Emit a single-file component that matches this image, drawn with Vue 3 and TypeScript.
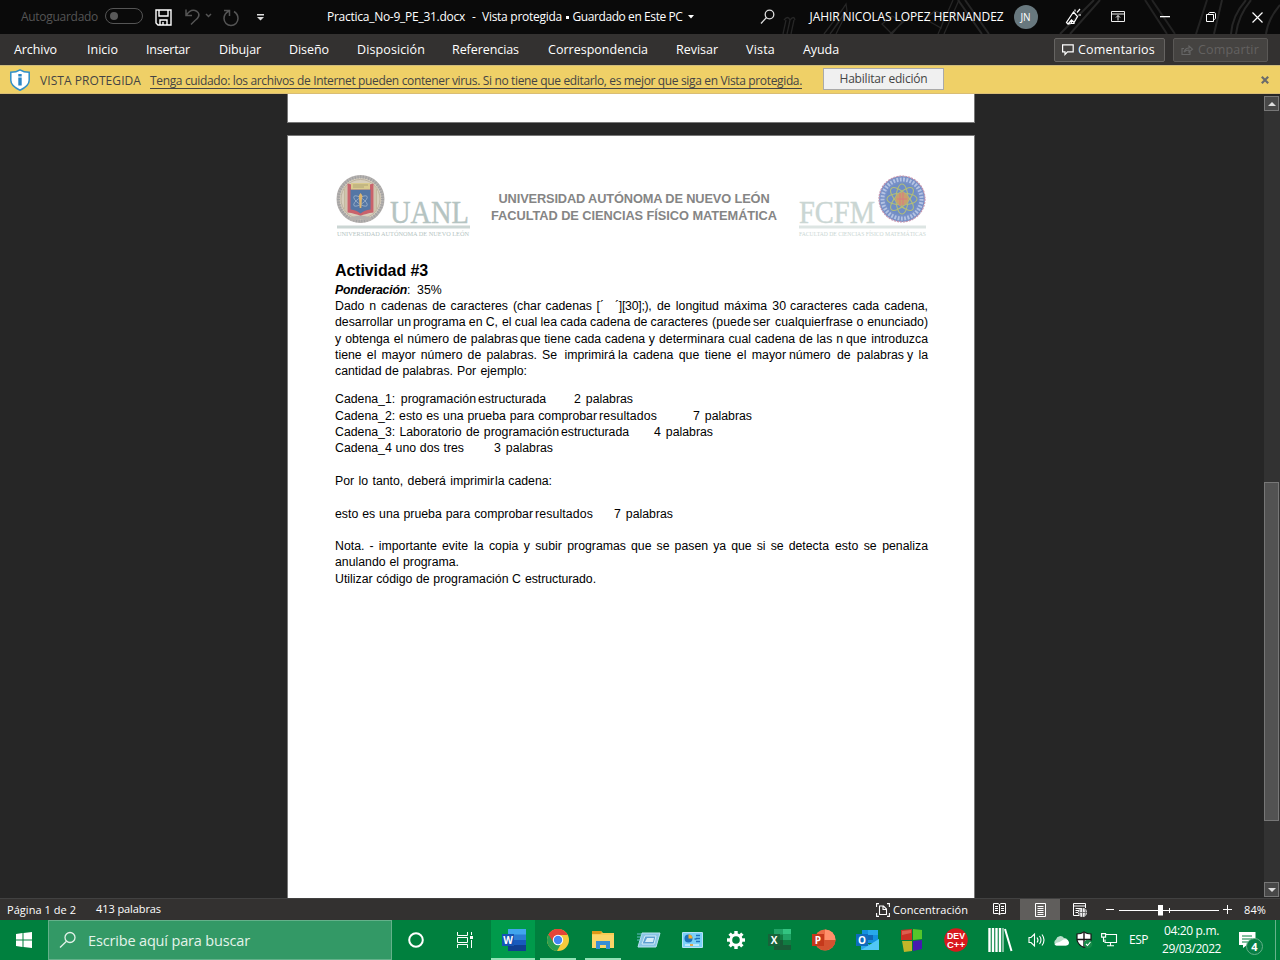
<script setup lang="ts">
import type { Directive } from 'vue'

// Stretches a label to the given width in pixels: between its letters,
// or with the "words" modifier between its words when it has several.
const vFit: Directive<HTMLElement, number, 'words'> = {
  mounted(el, binding) {
    const extra = binding.value - el.getBoundingClientRect().width
    const text = el.textContent ?? ''
    const gaps = text.split(' ').length - 1
    if (binding.modifiers.words && gaps > 0) el.style.wordSpacing = `${extra / gaps}px`
    else el.style.letterSpacing = `${extra / text.length}px`
    el.style.width = `${binding.value}px`
  },
}

const tabs: [string, number, number][] = [
  ['Archivo', 14, 57], ['Inicio', 87, 118], ['Insertar', 146, 190], ['Dibujar', 219, 261],
  ['Diseño', 289, 329], ['Disposición', 357, 425], ['Referencias', 452, 519],
  ['Correspondencia', 548, 648], ['Revisar', 676, 718], ['Vista', 746, 775], ['Ayuda', 803, 839],
]

type Run = [string, number, number]
const intro: Run[][] = [
  [['Dado n', 335, 376], ['cadenas de caracteres', 381, 508], ['(char cadenas [´', 513, 604], ['´][30];),', 615, 651.5], ['de longitud máxima 30', 657, 786], ['caracteres cada cadena,', 790, 928]],
  [['desarrollar un', 335, 411], ['programa en C,', 413, 498], ['el cual lea cada cadena de caracteres', 502, 708], ['(puede', 712, 751], ['ser cualquier', 753, 825], ['frase o enunciado)', 825.5, 928]],
  [['y obtenga el número de palabras', 335, 518], ['que tiene cada cadena y', 520, 655], ['determinara cual cadena de las n', 659, 843], ['que introduzca', 846, 928]],
  [['tiene el mayor número de palabras.', 335, 537], ['Se imprimirá', 542, 615], ['la cadena que tiene el mayor', 618, 786], ['número de palabras', 789, 904], ['y la', 907, 928]],
  [['cantidad de palabras.', 335, 453], ['Por ejemplo:', 457, 527]],
]
const rest: Run[][] = [
  [['Cadena_1: programación', 335, 476], ['estructurada', 478, 546], ['2 palabras', 574, 633]],
  [['Cadena_2: esto es una prueba para comprobar', 335, 597], ['resultados', 599, 657], ['7 palabras', 693, 752]],
  [['Cadena_3: Laboratorio de programación', 335, 559], ['estructurada', 561, 629], ['4 palabras', 654, 713]],
  [['Cadena_4 uno dos tres', 335, 464], ['3 palabras', 494, 553]],
  [],
  [['Por lo tanto, deberá imprimir', 335, 494], ['la cadena:', 495, 552]],
  [],
  [['esto es una prueba para comprobar', 335, 533], ['resultados', 535, 593], ['7 palabras', 614, 673]],
  [],
  [['Nota. - importante evite', 335, 468], ['la copia y subir programas', 474, 626], ['que se pasen ya que si se detecta', 631, 829], ['esto se penaliza', 835, 928]],
  [['anulando el programa.', 335, 459]],
  [['Utilizar código de programación C', 335, 521], ['estructurado.', 525, 596]],
]

const PAGE_LEFT = 335
const lead = (runs: Run[], i: number) => ({
  marginLeft: `${runs[i][1] - (i ? runs[i - 1][2] : PAGE_LEFT)}px`,
})
const tabLead = (i: number) => ({ marginLeft: `${tabs[i][1] - (i ? tabs[i - 1][2] : 0)}px` })
</script>

<template>
  <div class="screen">
    <header class="title">
      <svg class="doodles" width="540" height="34" viewBox="740 0 540 34" fill="none" stroke="#262626" stroke-width="2">
        <path d="M784 20q4-5 6 0q4-5 5 0M786 20l-3 14M790 20l-3 14M794 20l-3 14M824 34l18-24 4-6 1 7-17 23M830 34l15-22M836 34l10-20" stroke-width="1.3" />
        <path d="M882 24l10-8 10 6-10 12zM925 19l10-8 10 4-4 13zM938 34L953 0M944 34L959 0M890 34l20-18" stroke-width="1.3" />
        <path d="M958 0l24 34M965 0l24 34M1060 34l34-34M1070 34l30-34" />
        <path d="M1145 0l22 34M1152 0l23 34M1207 0L1196 34" stroke="#222" />
        <path d="M1246 0q-14 16-15 34M1251 0q-13 16-15 34M1280 5q-12 14-14 29M1222 0l-8 34" />
      </svg>
      <span v-fit="77" class="auto">Autoguardado</span>
      <span class="toggle"><i></i></span>
      <svg class="save" width="18" height="18" fill="none" stroke="#fff" stroke-width="1.4"><path d="M1 1h15v15h-13l-2-2zM4 1v6h9v-6M5 16v-5h7v5M8 13v3" /></svg>
      <svg class="undo" width="30" height="18" fill="none" stroke="#555" stroke-width="1.5"><path d="M2 1.500v6h6M2 7.500C5 3 9 1 13 3.500c4 3 1 7-2 9l-4 4M22 6l2.500 2.500L27 6" /></svg>
      <svg class="redo" width="18" height="18" fill="none" stroke="#555" stroke-width="1.500"><path d="M1 1.500h5.500V7M6 2C3 3.500 1 6 1 9.500a7 7 0 0 0 14 0c0-3-1.500-5.500-4-7" /></svg>
      <svg class="custom" width="9" height="7"><path d="M1 0h7v1.400H1zM1 3h7L4.500 6.500z" fill="#ddd" /></svg>
      <div class="doc">
        <span v-fit="138">Practica_No-9_PE_31.docx</span><span>-</span><span v-fit="80">Vista protegida</span><i></i><span v-fit="110">Guardado en Este PC</span>
        <svg width="6" height="4"><path d="M0 0h6L3 3.500z" fill="#fff" /></svg>
      </div>
      <svg class="find" width="16" height="16" fill="none" stroke="#ddd" stroke-width="1.300"><circle cx="9.500" cy="5.500" r="4.300" /><path d="M6.500 8.500L1 14.500" /></svg>
      <span v-fit="194" class="user">JAHIR NICOLAS LOPEZ HERNANDEZ</span>
      <span class="avatar">JN</span>
      <svg class="pen" width="17" height="18" fill="none" stroke="#fff" stroke-width="1.200"><path d="M8.500 4l4 4.500L9 14.500 6.500 12 3 16l-1.500-1.500zM1.500 14.500L3 16l3-.5M6 12.500l.5 3h2.500V14M10 3.500V1.500M12 4.500l3-3.500M13.500 7h2.500" /></svg>
      <svg class="ribbon" width="14" height="12" fill="none" stroke="#eee"><path d="M.5.5h13v10H.5zM.5 3h13M7 9.500v-5M5 6.500l2-2 2 2" /></svg>
      <svg class="min" width="10" height="2"><path d="M0 0h10v1.300H0z" fill="#fff" /></svg>
      <svg class="restore" width="10" height="10" fill="none" stroke="#fff"><path d="M.5 2.500h7v7h-7zM2.500 2.500C2.500 1 3 .5 4 .5h4c1 0 1.500.5 1.500 1.500v4c0 1-.5 1.500-2 1.500" /></svg>
      <svg class="close" width="11" height="11" fill="none" stroke="#fff" stroke-width="1.200"><path d="M.5.500l10 10M10.500.500l-10 10" /></svg>
    </header>

    <nav class="tabs">
      <span v-for="(t, i) in tabs" :key="t[0]" v-fit="t[2] - t[1]" :style="tabLead(i)">{{ t[0] }}</span>
      <div class="actions">
        <button class="on"><svg width="12" height="12" fill="none" stroke="#fff" stroke-width="1.200"><path d="M.6.900h10.600v7H5.500L3 10.500V7.900H.6z" /></svg><span v-fit="77">Comentarios</span></button>
        <button class="off"><svg width="12" height="12" fill="none" stroke="#666" stroke-width="1.100"><path d="M3 4.500H1v6h8V8M3 8c1-3 3-4 5-4V2l3.500 3.200L8 8V6C6 6 4.500 6.500 3 8z" /></svg><span v-fit="61">Compartir</span></button>
      </div>
    </nav>

    <div class="notice">
      <svg class="shield" width="20" height="22"><path d="M10 .8C7 2.800 4 3.200.8 3.200v8c0 4 4 7.500 9.200 10 5.200-2.500 9.200-6 9.200-10v-8C16 3.200 13 2.800 10 .8z" fill="#fff" stroke="#2f8fc8" stroke-width="1.500" /><path d="M8.300 5h3.400v2.500H8.300zM8.300 8.500h3.400v8H8.300z" fill="#2b86c5" /></svg>
      <span v-fit="101" class="pv">VISTA PROTEGIDA</span>
      <span v-fit="652" class="warn">Tenga cuidado: los archivos de Internet pueden contener virus. Si no tiene que editarlo, es mejor que siga en Vista protegida.</span>
      <button><span v-fit="88">Habilitar edición</span></button>
      <svg class="x" width="8" height="8"><path d="M.8.800l6.400 6.400M7.200.800L.8 7.200" stroke="#6b6b6b" stroke-width="2.200" /></svg>
    </div>

    <main class="canvas">
      <div class="pages">
        <div class="page previous"></div>
        <article class="page current">
          <div class="letterhead">
            <svg class="uanl" width="134" height="62">
              <circle cx="24.500" cy="24" r="22.500" fill="#d8cfbd" stroke="#b6b2b0" stroke-width="3" />
              <circle cx="24.500" cy="24" r="22" fill="none" stroke="#a2a2a2" stroke-width="3" stroke-dasharray="1.200 1.500" />
              <circle cx="24.500" cy="24" r="19.500" fill="none" stroke="#bcb2a1" stroke-width="1" />
              <path d="M8.500 14v20M40.500 14v20M10 11v26M39 11v26" stroke="#c5b99e" />
              <path d="M11.500 8.500l4 1v3h18v-3l4-1v29q-8 1-13 3.500-5-2.500-13-3.500z" fill="#c9626b" />
              <path d="M14.500 14.500h20v20q-6 .5-10 4-4-3.500-10-4z" fill="#5476a5" />
              <path d="M15 8h19v6.500H15z" fill="#d9ca8d" />
              <path d="M17 10h15M17 12h11" stroke="#a59a72" stroke-width=".8" />
              <g fill="none" stroke="#9eb2ca" stroke-width=".8"><ellipse cx="24.500" cy="26" rx="8" ry="3" transform="rotate(35 24.500 26)" /><ellipse cx="24.500" cy="26" rx="8" ry="3" transform="rotate(-35 24.500 26)" /></g>
              <path d="M24.500 18q3 3 1.500 5l-.7 10h-1.600L23 23q-1-2 1.500-5z" fill="#dfb56d" />
              <path d="M13 43q11-5 23 0l-2 3q-9-3-19 0z" fill="#b5b1ad" />
              <text x="54" y="48" font-size="31" textLength="79" lengthAdjust="spacingAndGlyphs" class="big">UANL</text>
              <path d="M1 50.500h133v3H1z" fill="#cbd6d4" />
              <text x="1" y="60.500" font-size="7" textLength="132" lengthAdjust="spacingAndGlyphs">UNIVERSIDAD AUTÓNOMA DE NUEVO LEÓN</text>
            </svg>
            <div class="names"><div><span v-fit="271">UNIVERSIDAD AUTÓNOMA DE NUEVO LEÓN</span></div><div><span v-fit="286">FACULTAD DE CIENCIAS FÍSICO MATEMÁTICA</span></div></div>
            <svg class="fcfm" width="128" height="62">
              <text x="0" y="48" font-size="31" textLength="76" lengthAdjust="spacingAndGlyphs" class="big">FCFM</text>
              <circle cx="103" cy="24" r="23" fill="#7891c7" stroke="#c795ad" stroke-width="1.200" stroke-dasharray="2 1" />
              <circle cx="103" cy="24" r="19.500" fill="none" stroke="#b4c3e3" stroke-width="4" stroke-dasharray="1.800 1.500" />
              <circle cx="103" cy="24" r="16" fill="#6f8dc6" />
              <g fill="none" stroke="#b2bd78" stroke-width="1.100"><ellipse cx="103" cy="24" rx="15" ry="6" /><ellipse cx="103" cy="24" rx="15" ry="6" transform="rotate(45 103 24)" /><ellipse cx="103" cy="24" rx="15" ry="6" transform="rotate(90 103 24)" /><ellipse cx="103" cy="24" rx="15" ry="6" transform="rotate(135 103 24)" /></g>
              <circle cx="103" cy="24" r="6.500" fill="#c8a06f" /><path d="M101 18v13M104 17v13M98 24h10" stroke="#d97b82" />
              <path d="M0 50.500h127v3H0z" fill="#dde5e3" />
              <text x="0" y="60.500" font-size="7" textLength="127" lengthAdjust="spacingAndGlyphs">FACULTAD DE CIENCIAS FÍSICO MATEMÁTICAS</text>
            </svg>
          </div>
          <h1><span v-fit="93">Actividad #3</span></h1>
          <p class="line"><b v-fit="72">Ponderación</b><span>:</span><span v-fit="25" class="pct">35%</span></p>
          <p v-for="(line, n) in intro" :key="n" class="line"><span v-for="(r, i) in line" :key="i" v-fit.words="r[2] - r[1]" :style="lead(line, i)">{{ r[0] }}</span></p>
          <div class="rest">
            <p v-for="(line, n) in rest" :key="n" class="line"><span v-for="(r, i) in line" :key="i" v-fit.words="r[2] - r[1]" :style="lead(line, i)">{{ r[0] }}</span></p>
          </div>
        </article>
      </div>
      <div class="scroll">
        <span class="arrow"><svg width="8" height="4"><path d="M0 4h8L4 0z" fill="#ddd" /></svg></span>
        <span class="thumb"></span>
        <span class="arrow"><svg width="8" height="4"><path d="M0 0h8L4 4z" fill="#ddd" /></svg></span>
      </div>
    </main>

    <footer class="status">
      <span v-fit="69" class="pg">Página 1 de 2</span>
      <span v-fit="65" class="wc">413 palabras</span>
      <svg class="focus" width="14" height="14" fill="none" stroke="#fff" stroke-width="1.100"><path d="M3 .600H.600V4M.600 10v3.400H3M11 .600h2.400V4M13.400 10v3.400H11M3.500 3h4l3 3v5.500h-7zM7 3v3.500h3.500" /></svg>
      <span v-fit="75">Concentración</span>
      <svg class="read" width="13" height="12" fill="none" stroke="#fff"><path d="M.5.500h4.500l1.500 1 1.500-1h4.500v10H8l-1.500 1-1.500-1H.5zM6.500 1.500v10M2 3.500h3M2 5.500h3M2 7.500h3M8 3.500h3M8 5.500h3M8 7.500h3" /></svg>
      <span class="print"><svg width="11" height="14" fill="none" stroke="#fff"><path d="M.5.500h10v13H.5zM2.500 3.500h6M2.500 5.500h6M2.500 7.500h6M2.500 9.500h6M2.500 11.500h6" /></svg></span>
      <svg class="web" width="14" height="14" fill="none" stroke="#fff"><path d="M6 12.500H.5V.500h12V5M.5 3h12M2.500 5.500H9M2.500 7.500H6M2.500 9.500H5" /><circle cx="9.500" cy="9.500" r="4.500" fill="#eee" stroke="none" /><path d="M5 9.500h9M9.500 5v9M7 6q-1 3.500 0 7M12 6q1 3.500 0 7" stroke="#555" stroke-width=".8" /></svg>
      <svg class="zoom" width="126" height="12" stroke="#fff"><path d="M0 5.500h8M13 6.500h100M63.500 4v5M117 5.500h9M121.500 1v9" /><path d="M52 1h5v10.500h-5z" fill="#fff" stroke="none" /></svg>
      <span v-fit="22" class="pc">84%</span>
    </footer>

    <div class="taskbar">
      <span class="start"><svg width="16" height="16" fill="#fff"><path d="M0 2l6.500-.9v6.400H0zM7.500 1L16 0v7.500H7.500zM0 8.500h6.500v6.400L0 14zM7.500 8.500H16V16l-8.500-1.100z" /></svg></span>
      <label class="search"><svg width="18" height="18" fill="none" stroke="#e4f2ea" stroke-width="1.300"><circle cx="11" cy="6.500" r="5" /><path d="M7.500 10.200L1 16.500" /></svg><span v-fit="162">Escribe aquí para buscar</span></label>
      <span class="cell wide"><svg width="18" height="18"><circle cx="9" cy="9" r="6.800" fill="none" stroke="#fff" stroke-width="2" /></svg></span>
      <span class="cell wide"><svg width="17" height="16" fill="none" stroke="#fff"><path d="M1.500 0v3.500h10V0M1.500 5.500h10v5h-10zM1.500 16v-3.500h10V16M15.500 0v3M15.500 8v8" /><path d="M14 4h3v3h-3z" fill="#fff" stroke="none" /></svg></span>
      <span class="cell word"><svg width="25" height="22"><path d="M7 0h18v6H7z" fill="#41a5ee" /><path d="M7 5.500h18V11H7z" fill="#2b7cd3" /><path d="M7 11h18v5.500H7z" fill="#185abd" /><path d="M7 16h18v6H7z" fill="#103f91" /><path d="M1 5h12v12H1z" fill="#1555b5" /><text x="7" y="14.500" class="app" font-size="10">W</text></svg></span>
      <span class="cell open"><svg width="22" height="22"><circle cx="11" cy="11" r="11" fill="#f6ca3d" /><path d="M11 11L1.500 5.500A11 11 0 0 1 20.500 5.500L11 6z" fill="#e44438" /><path d="M1.500 5.500A11 11 0 0 0 10 22l5-9-4-2z" fill="#299e50" /><path d="M1.500 5.500L7 14l4-8h9.500A11 11 0 0 0 1.500 5.500" fill="#e44438" /><circle cx="11" cy="11" r="5.200" fill="#fff" /><circle cx="11" cy="11" r="4.200" fill="#4285f4" /></svg></span>
      <span class="cell open"><svg width="22" height="18"><path d="M0 0h9l2 2h11v15H0z" fill="#f9cb55" /><path d="M0 0h9l1 2-2 1H0z" fill="#dc9818" /><path d="M0 4h22v13H0z" fill="#fad568" /><path d="M4 18v-8h14v8h-4v-4H8v4z" fill="#378fd5" /></svg></span>
      <span class="cell"><svg width="23" height="16"><path d="M5 1h18l-4 14H1z" fill="#8ac5e6" stroke="#bce2f4" /><path d="M8 4h11l-2 8H5z" fill="#5d9fd1" stroke="#d2edf8" /><path d="M10 6h7l-1 4H8z" fill="#d7edf8" /><path d="M0 2h5M0 5h4M0 8h3" stroke="#64bdc7" /></svg></span>
      <span class="cell"><svg width="21" height="16"><rect width="21" height="16" rx="1" fill="#b5e2f8" /><rect x="1" y="1" width="19" height="14" fill="#7bd0f9" /><circle cx="6.500" cy="6.500" r="4" fill="#1c72bd" /><path d="M6.500 6.500V2.500a4 4 0 0 1 4 4z" fill="#f6ad2f" /><path d="M14 3.500h4M14 6.500h4M14 9.500h4M12.500 7h2" stroke="#1c72bd" stroke-width="1.500" /><path d="M3 13h14" stroke="#fff" /><path d="M8 13h3" stroke="#e89a28" stroke-width="1.600" /></svg></span>
      <span class="cell"><svg width="20" height="20" viewBox="-10 -10 20 20"><g fill="#fff"><rect v-for="a in [0, 45, 90, 135]" :key="a" x="-1.700" y="-9" width="3.400" height="18" :transform="`rotate(${a})`" /><circle r="6.700" /></g><circle r="3.800" fill="#00803e" /></svg></span>
      <span class="cell"><svg width="24" height="22"><path d="M6 0h17v6H6z" fill="#21a366" /><path d="M15 0h8v6h-8z" fill="#33c481" /><path d="M6 5.500h17V11H6z" fill="#107c41" /><path d="M15 5.500h8V11h-8z" fill="#21a366" /><path d="M6 11h17v10H6z" fill="#185c37" /><path d="M15 11h8v5h-8z" fill="#107c41" /><path d="M0 5h12v12H0z" fill="#17643a" /><text x="6" y="14.500" class="app" font-size="10">X</text></svg></span>
      <span class="cell"><svg width="24" height="22"><circle cx="13" cy="11" r="10.500" fill="#ed6c47" /><path d="M13 .500A10.500 10.500 0 0 1 23.500 11H13z" fill="#ff8f6b" /><path d="M2.500 11h21A10.500 10.500 0 0 1 3 14z" fill="#d35230" /><path d="M0 5h12v12H0z" fill="#c5391b" /><text x="6" y="14.500" class="app" font-size="10">P</text></svg></span>
      <span class="cell"><svg width="24" height="22"><path d="M6 1h16v13H6z" fill="#1490df" /><path d="M12 1h10v5H12z" fill="#28a8ea" /><path d="M12 6h5v5h-5z" fill="#0f67b5" /><path d="M5 11l9 5 9-6v11H5z" fill="#28a8ea" /><path d="M5 21l18-11v11z" fill="#50c7f5" /><path d="M0 5h12v12H0z" fill="#0f6cbd" /><text x="6" y="14.500" class="app" font-size="10">O</text></svg></span>
      <span class="cell"><svg width="22" height="23"><path d="M0 1l11-1v11H0z" fill="#cb3025" /><path d="M12 0l9 1v9l-9 1z" fill="#55c52b" /><path d="M1 12h10v10l-8 1z" fill="#c1b529" /><path d="M12 12l9-1v9l-9 2z" fill="#4719b1" /><path d="M1 2l9-1v3L1 6z" fill="#db5f4f" /></svg></span>
      <span class="cell"><svg width="24" height="24"><circle cx="12" cy="12" r="11.800" fill="#d8191d" /><text x="12" y="10.500" class="dev" font-size="8.200" textLength="18" lengthAdjust="spacingAndGlyphs">DEV</text><text x="12" y="19.800" class="dev" font-size="8.200" textLength="18" lengthAdjust="spacingAndGlyphs">C++</text></svg></span>
      <span class="cell"><svg width="25" height="24" fill="none" stroke="#fff" stroke-width="2.400"><path d="M1.500 0v24M5 0v24M8.500 0v24M12 0v24" /><path d="M15 0v24" stroke-width="1" /><path d="M17 1l6.500 22" stroke-width="2" /></svg></span>
      <div class="tray">
        <svg class="vol" width="17" height="14" fill="none" stroke="#fff" stroke-width="1.100"><path d="M1 4.500h2L6.500 1v12L3 9.500H1zM9 4.500q2 2.500 0 5M11.500 3q3 4 0 8M14 1.500q4 5.500 0 11" /></svg>
        <svg class="cloud" width="16" height="11"><path d="M3 10.500a3.500 3.500 0 0 1 0-6A4.500 4.500 0 0 1 11 3a4 4 0 0 1 2 7.500z" fill="#b9decb" /><path d="M1.500 9.500q2-2.500 5-2.500l4-2.500q4.500-1 5.500 3 0 3-3 3H4q-1.500 0-2.500-1z" fill="#fff" /></svg>
        <svg class="guard" width="17" height="18"><path d="M8 1Q5 3 1 3v6q1 5 7 7.500Q14 14 15 9V3Q11 3 8 1z" fill="#fff" stroke="#171717" stroke-width="1.200" /><path d="M8 2v14M1 8.500h14" stroke="#171717" stroke-width="1.400" /><circle cx="12" cy="13" r="4.300" fill="#168b49" /><path d="M10 13l1.500 1.500L14.500 11" stroke="#fff" fill="none" stroke-width="1.100" /></svg>
        <svg class="net" width="16" height="14" fill="none" stroke="#fff" stroke-width="1.100"><path d="M5 1.500h10.500v8H4v-3M9.500 9.500v3M6 12.800h7M.600.600h4v3.500h-4zM2.500 4v5" /></svg>
        <span v-fit="19" class="esp">ESP</span>
        <div class="clock"><span v-fit="55">04:20 p.m.</span><span v-fit="59">29/03/2022</span></div>
        <span class="notes"><svg width="17" height="16"><path d="M0 0h16.500v13H8l-4 3v-3H0z" fill="#fff" /><path d="M3 4h10M3 7h10M3 10h6" stroke="#00803e" /></svg><b>4</b></span>
      </div>
    </div>
  </div>
</template>

<style>
body { margin: 0; overflow: hidden; }
</style>

<style scoped>
.screen { width: 1280px; height: 960px; display: flex; flex-direction: column; overflow: hidden; background: #262626; color: #fff; font: 12px/16px "Open Sans", "Noto Sans", sans-serif; }
.screen * { box-sizing: border-box; }
span, b { white-space: pre; flex: none; display: inline-block; }
svg { flex: none; display: block; overflow: visible; }
button { font: inherit; margin: 0; padding: 0; }
.title { position: relative; height: 34px; flex: none; display: flex; align-items: center; background: #0a0a0a; }
.title > * { flex: none; }
.title > :not(.doodles) { z-index: 1; }
.title .doodles { position: absolute; right: 0; top: 0; overflow: hidden; }
.auto { margin-left: 21px; color: #555; }
.toggle { margin: 0 0 2px 7px; width: 38px; height: 16px; border: 1px solid #555; border-radius: 8px; padding: 3px 4px; }
.toggle i { display: block; width: 8px; height: 8px; border-radius: 50%; background: #595959; }
.save { margin: 2px 0 0 12px; }
.undo { margin-left: 11px; }
.redo { margin: 2px 0 0 9px; }
.custom { margin-left: 15px; }
.doc { margin-left: 62px; display: flex; align-items: center; }
.doc > span:nth-child(2) { margin: 0 10px 0 7px; width: 0; }
.doc i { width: 3px; height: 3px; background: #fff; margin: 0 4px 0 3.500px; }
.doc svg { margin-left: 5px; }
.find { margin-left: 66px; }
.user { margin-left: 34px; }
.avatar { margin-left: 10px; width: 24px; height: 24px; border-radius: 50%; background: #68787e; font-size: 10px; line-height: 24px; text-align: center; }
.pen { margin-left: 27px; }
.ribbon { margin-left: 29px; }
.min { margin-left: 35px; }
.restore { margin-left: 36px; }
.close { margin-left: 36px; }
.tabs { height: 31px; flex: none; display: flex; align-items: center; background: #333130; font-size: 12.500px; }
.actions { display: flex; gap: 8px; margin-left: auto; padding-right: 12px; }
.actions button { display: flex; align-items: center; height: 24px; border-radius: 2px; border: 1px solid #666462; background: #454341; }
.actions .on { width: 111px; padding-left: 7px; gap: 4px; color: #fff; }
.actions .off { width: 95px; padding-left: 7px; gap: 5px; color: #636160; border-color: #5a5856; background: #454341; }
.notice { height: 29px; flex: none; display: flex; align-items: center; background: #efd067; color: #444; border-top: 1px solid #cfbb7a; border-bottom: 1px solid #d9bd74; }
.shield { margin-left: 10px; }
.pv { margin-left: 10px; padding-top: 2px; }
.warn { margin-left: 9px; margin-top: 3px; line-height: 14px; border-bottom: 1px solid #444; }
.notice button { margin: 0 0 2px 21px; width: 121px; height: 22px; border: 1px solid #aaa; background: #f0f0f0; color: #444; padding-top: 1px; }
.x { margin-left: 317px; }
.canvas { height: 804px; flex: none; display: flex; justify-content: space-between; overflow: hidden; }
.pages { margin-left: 287px; width: 688px; }
.page { background: #fff; border: 1px solid #777; }
.previous { height: 29px; border-top: 0; }
.current { margin-top: 12px; height: 780px; padding: 39px 46px 0 47px; color: #000; font: 12.300px/16.300px "Liberation Sans", Arial, sans-serif; }
.letterhead { display: flex; height: 62px; padding-left: 1px; }
.letterhead text { font-family: "Liberation Serif", serif; fill: #b5c4c2; }
.letterhead .fcfm text { fill: #cad6d3; }
.letterhead .big { stroke: #b5c4c2; stroke-width: .4; }
.letterhead .fcfm .big { stroke: #cad6d3; }
.names { margin: 16px 22px 0 21px; width: 286px; text-align: center; font-size: 12.800px; line-height: 16.600px; font-weight: bold; color: #858585; }
h1 { margin: 23px 0 0; height: 21.700px; font-size: 16px; line-height: 21px; }
.line { margin: 0; height: 16.320px; display: flex; }
.line b { font-style: italic; }
.pct { margin-left: 6.500px; }
.rest { margin-top: 11.800px; }
.scroll { width: 16px; height: 801px; margin-top: 2px; padding-right: 1px; display: flex; flex-direction: column; background: #323232; }
.arrow { width: 15px; height: 15px; border: 1px solid #777; background: #484848; display: flex; align-items: center; justify-content: center; }
.thumb { width: 15px; height: 339px; margin: 371px 0 auto; background: #525252; border: 1px solid #777; }
.status { height: 22px; flex: none; display: flex; align-items: center; background: #333130; border-top: 1px solid #414141; font-size: 11px; }
.pg { margin-left: 7px; }
.wc { margin: 0 0 1px 20px; }
.focus { margin: 0 3px 0 715px; }
.read { margin: 0 0 1px 25px; }
.print { width: 40px; height: 21px; margin-left: 14px; background: #605e5c; display: flex; align-items: center; justify-content: center; }
.web { margin-left: 13px; }
.zoom { margin-left: 19px; }
.pc { margin-left: 12px; }
.taskbar { height: 40px; flex: none; display: flex; background: #00803e; }
.start { width: 48px; display: flex; align-items: center; justify-content: center; }
.search { width: 344px; border: 1px solid #64b18a; background: #339966; display: flex; align-items: center; padding-left: 10px; gap: 11px; font-size: 14.500px; color: #e3f3ea; }
.search span { padding-top: 1px; }
.cell { width: 44px; display: flex; align-items: center; justify-content: center; }
.cell.wide { width: 48px; }
.word { margin: 0 1px 0 3px; background: #009a4b; box-shadow: inset 0 -2px #93e2b6; }
.open { margin-right: 1px; position: relative; }
.open::after { content: ""; position: absolute; left: 4px; right: 4px; bottom: 0; height: 2px; background: #93e2b6; }
.app { fill: #fff; font-family: "Open Sans", sans-serif; font-weight: bold; text-anchor: middle; }
.dev { fill: #fff; font-family: "Liberation Sans", Arial, sans-serif; font-weight: bold; text-anchor: middle; }
.tray { display: flex; align-items: center; margin-left: 6px; width: 248px; border-right: 1px solid #66b38b; }
.cloud { margin-left: 8px; }
.guard { margin-left: 7px; }
.net { margin-left: 8px; }
.esp { margin-left: 12px; }
.clock { margin-left: 14px; width: 59px; display: flex; flex-direction: column; align-items: center; line-height: 18px; }
.notes { margin-left: 18px; position: relative; }
.notes b { position: absolute; left: 7px; top: 6px; width: 17px; height: 17px; border: 1px solid #63b188; border-radius: 50%; background: #087f45; font-size: 11px; line-height: 15px; text-align: center; }
</style>
